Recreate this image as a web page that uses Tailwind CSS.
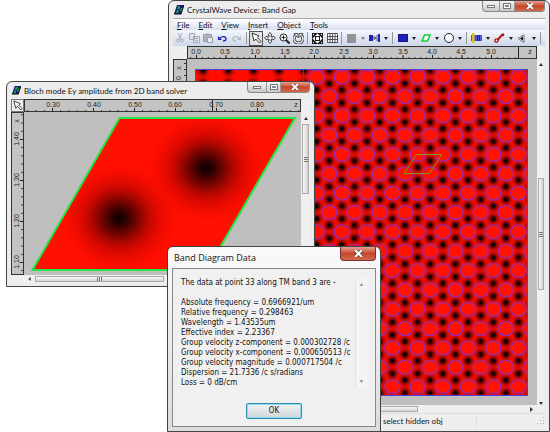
<!DOCTYPE html>
<html lang="en">
<head>
<meta charset="utf-8">
<meta name="viewport" content="width=device-width, initial-scale=1">
<title>CrystalWave Device: Band Gap</title>
<script src="https://cdn.jsdelivr.net/npm/@tailwindcss/browser@4"></script>
</head>
<body class="relative min-h-screen overflow-hidden bg-white font-[Lato,'Noto_Sans',sans-serif] text-[8px] leading-[10px] text-[#111]">

<!-- Device window -->
<section aria-label="CrystalWave Device: Band Gap" class="absolute top-0 right-0 bottom-0 left-[168px] flex flex-col rounded-t-md border border-[#444] bg-[#ececec] px-[4px] pb-[3px]">
  <header class="flex h-[17px] shrink-0 items-center gap-[3px] pl-px">
    <svg class="h-[10px] w-[10px]" viewBox="0 0 10 10"><path d="M3 0H10L7 9H0Z" fill="#1a1a80"/><path d="M4 1H6V4H3ZM7 3H9L8 6H6ZM3 5H5L4 8H2Z" fill="#18b030"/><path d="M10 0L7 9H0" fill="none" stroke="#111"/></svg>
    <h1 class="grow whitespace-nowrap">CrystalWave Device: Band Gap</h1>
    <div class="flex h-[11px] self-start overflow-hidden rounded-b-sm border border-t-0 border-[#888] bg-linear-to-b from-[#f4f4f4] to-[#c9c9c9]">
      <button aria-label="Minimize" class="flex w-[17px] items-center justify-center border-r border-[#999]"><span class="h-[3px] w-[8px] border border-[#777] bg-white"></span></button>
      <button aria-label="Maximize" class="flex w-[15px] items-center justify-center border-r border-[#999]"><span class="h-[6px] w-[8px] border border-[#777] bg-white p-px"><span class="block h-[2px] border border-[#888]"></span></span></button>
      <button aria-label="Close" class="flex w-[29px] items-center justify-center bg-linear-to-b from-[#e3a093] via-[#c8452c] to-[#d0694a]"><svg class="h-[6px] w-[8px]" viewBox="0 0 8 6"><path d="M1 0L7 6M7 0L1 6" stroke="#555" stroke-width="3"/><path d="M1 0L7 6M7 0L1 6" stroke="#fff" stroke-width="1.8"/></svg></button>
    </div>
  </header>
  <nav class="flex h-[12px] shrink-0 items-center gap-[9px] border-t border-[#aaa] bg-linear-to-b from-white to-[#d8dfef] pl-[4px]">
    <button><u>F</u>ile</button><button><u>E</u>dit</button><button><u>V</u>iew</button><button><u>I</u>nsert</button><button><u>O</u>bject</button><button><u>T</u>ools</button>
  </nav>
  <div role="toolbar" class="flex h-[16px] shrink-0 items-center overflow-hidden bg-linear-to-b from-[#f4f7fd] to-[#cdd6ea]">
    <button aria-label="Cut" class="w-[14px] shrink-0"><svg class="mx-auto h-[10px] w-[8px]" viewBox="0 0 8 10" fill="none" stroke="#aab" ><path d="M2 0L5 6M6 0L3 6"/><circle cx="2" cy="7.5" r="1.4"/><circle cx="6" cy="7.5" r="1.4"/></svg></button>
    <button aria-label="Copy" class="w-[14px] shrink-0"><svg class="mx-auto h-[10px] w-[11px]" viewBox="0 0 11 10" fill="#dfe3ea" stroke="#a4a8b0"><path d="M.5 .5H5.500V6.500H.5ZM4.500 3.500H10.500V9.500H4.500Z"/><path d="M6 5.500H9M6 7.500H9"/></svg></button>
    <button aria-label="Paste" class="w-[14px] shrink-0"><svg class="mx-auto h-[10px] w-[10px]" viewBox="0 0 10 10" fill="#b0b3b9" stroke="#999da5"><path d="M.5 1.500H8.500V8.500H.5Z"/><path d="M4.500 4.500H9.500V9.500H4.500Z" fill="#e8ebf0"/><path d="M3 1H6"/></svg></button>
    <button aria-label="Undo" class="w-[14px] shrink-0"><svg class="mx-auto h-[7px] w-[9px]" viewBox="0 0 9 7"><path d="M2 3C4 1 8 1 8 4C8 5 7 6 5 6" fill="none" stroke="#2222b0" stroke-width="1.300"/><path d="M0 1V5H4Z" fill="#2222b0"/></svg></button>
    <button aria-label="Redo" class="w-[15px] shrink-0"><svg class="mx-auto h-[7px] w-[9px]" viewBox="0 0 9 7"><path d="M7 3C5 1 1 1 1 4C1 5 2 6 4 6" fill="none" stroke="#b4b8c2" stroke-width="1.300"/><path d="M9 1V5H5Z" fill="#b4b8c2"/></svg></button>
    <span class="mx-[2px] h-[12px] w-px shrink-0 bg-[#999]"></span>
    <button aria-label="Select" class="h-[15px] w-[14px] shrink-0 border border-[#555] bg-[#e2e2e2]"><svg class="mx-auto h-[12px] w-[11px]" viewBox="0 0 11 12"><path d="M1 1L8 4L6.300 5.500L10 9.500L8.500 11L4.800 7L3 9Z" fill="#fff" stroke="#333"/></svg></button>
    <button aria-label="Pan" class="w-[14px] shrink-0"><svg class="mx-auto h-[12px] w-[12px]" viewBox="0 0 12 12"><path d="M6 .5L8 3H7V5H9V4L11.500 6L9 8V7H7V9H8L6 11.500L4 9H5V7H3V8L.5 6L3 4V5H5V3H4Z" fill="#fff" stroke="#333" stroke-width=".9"/></svg></button>
    <button aria-label="Zoom" class="w-[14px] shrink-0"><svg class="mx-auto h-[11px] w-[11px]" viewBox="0 0 11 11"><circle cx="4.500" cy="4.500" r="3.500" fill="#fff" stroke="#222"/><path d="M7 7L10.500 10.500" stroke="#222" stroke-width="2"/><path d="M2.500 4.500H6.500M4.500 2.500V6.500" stroke="#222"/></svg></button>
    <button aria-label="Rotate" class="w-[14px] shrink-0"><svg class="mx-auto h-[11px] w-[11px]" viewBox="0 0 11 11"><path d="M3 2C-.5 5 1 10 5.500 10S11.500 5 8 2" fill="none" stroke="#333" stroke-width="3"/><path d="M3 2C-.5 5 1 10 5.500 10S11.500 5 8 2" fill="none" stroke="#eee" stroke-width="1.400"/><path d="M1 .5H5V4.500ZM10 .5H6V4.500Z" fill="#fff" stroke="#333" stroke-width=".8"/></svg></button>
    <span class="mx-[2px] h-[12px] w-px shrink-0 bg-[#999]"></span>
    <button aria-label="Fit" class="w-[15px] shrink-0"><svg class="mx-auto h-[11px] w-[11px]" viewBox="0 0 11 11"><path d="M0 0H11V11H0Z" fill="#1c1c1c"/><path d="M4 4H7V7H4ZM5.500 .5L8 3H3ZM5.500 10.500L8 8H3ZM.5 5.500L3 3V8ZM10.500 5.500L8 3V8ZM1 1H2V2H1ZM9 1H10V2H9ZM1 9H2V10H1ZM9 9H10V10H9Z" fill="#fff"/></svg></button>
    <button aria-label="Grid" class="w-[14px] shrink-0"><svg class="mx-auto h-[10px] w-[11px]" viewBox="0 0 11 10"><path d="M.5 .5H10.500V9.500H.5ZM3 0V10M5.500 0V10M8 0V10M0 3.500H11M0 6.500H11" fill="#fff" stroke="#444" stroke-width=".9"/></svg></button>
    <span class="mx-[2px] h-[12px] w-px shrink-0 bg-[#999]"></span>
    <button aria-label="Fill" class="w-[15px] shrink-0"><span class="mx-auto block h-[9px] w-[9px] bg-[#949494]"></span></button>
    <button aria-label="Fill options" class="w-[8px] shrink-0"><svg class="mx-auto h-[3px] w-[4px]" viewBox="0 0 4 3"><path d="M0 0H4L2 3Z" fill="#888"/></svg></button>
    <button aria-label="Waveguide" class="w-[15px] shrink-0"><svg class="mx-auto h-[8px] w-[11px]" viewBox="0 0 11 8"><path d="M0 1H4V7H0ZM9 0H11V8H9Z" fill="#2020b8"/><path d="M5 2.500L7 4L5 5.500ZM8 1V7" fill="#fff" stroke="#223" stroke-width=".8"/></svg></button>
    <button aria-label="Waveguide options" class="w-[8px] shrink-0"><svg class="mx-auto h-[3px] w-[4px]" viewBox="0 0 4 3"><path d="M0 0H4L2 3Z" fill="#222"/></svg></button>
    <span class="mx-[2px] h-[12px] w-px shrink-0 bg-[#999]"></span>
    <button aria-label="Rectangle" class="w-[15px] shrink-0"><span class="mx-auto block h-[8px] w-[10px] border border-[#15157a] bg-[#2020c0]"></span></button>
    <button aria-label="Rectangle options" class="w-[8px] shrink-0"><svg class="mx-auto h-[3px] w-[4px]" viewBox="0 0 4 3"><path d="M0 0H4L2 3Z" fill="#222"/></svg></button>
    <button aria-label="Parallelogram" class="w-[15px] shrink-0"><svg class="mx-auto h-[8px] w-[10px]" viewBox="0 0 10 8"><path d="M3.500 1H9L6.500 7H1Z" fill="#fff" stroke="#12d030" stroke-width="1.600"/></svg></button>
    <button aria-label="Parallelogram options" class="w-[8px] shrink-0"><svg class="mx-auto h-[3px] w-[4px]" viewBox="0 0 4 3"><path d="M0 0H4L2 3Z" fill="#222"/></svg></button>
    <button aria-label="Circle" class="w-[15px] shrink-0"><span class="mx-auto block h-[10px] w-[10px] rounded-full border border-[#222] bg-white"></span></button>
    <button aria-label="Circle options" class="w-[8px] shrink-0"><svg class="mx-auto h-[3px] w-[4px]" viewBox="0 0 4 3"><path d="M0 0H4L2 3Z" fill="#222"/></svg></button>
    <span class="mx-[2px] h-[12px] w-px shrink-0 bg-[#999]"></span>
    <button aria-label="Source" class="w-[15px] shrink-0"><svg class="mx-auto h-[10px] w-[11px]" viewBox="0 0 11 10"><path d="M0 2H11V8H0Z" fill="#4c58d8"/><path d="M6.500 2V8M8.500 2V8" stroke="#1818a0"/><path d="M1 0H3.500V10H1Z" fill="#e0c020"/></svg></button>
    <button aria-label="Source options" class="w-[8px] shrink-0"><svg class="mx-auto h-[3px] w-[4px]" viewBox="0 0 4 3"><path d="M0 0H4L2 3Z" fill="#222"/></svg></button>
    <button aria-label="Sensor" class="w-[15px] shrink-0"><svg class="mx-auto h-[10px] w-[11px]" viewBox="0 0 11 10"><path d="M3 7.500L8 2" stroke="#b01414" stroke-width="2"/><circle cx="2.500" cy="7.500" r="1.600" fill="#fff" stroke="#b01414" stroke-width="1.400"/><circle cx="8.800" cy="1.800" r="1.500" fill="#b01414"/></svg></button>
    <button aria-label="Sensor options" class="w-[8px] shrink-0"><svg class="mx-auto h-[3px] w-[4px]" viewBox="0 0 4 3"><path d="M0 0H4L2 3Z" fill="#222"/></svg></button>
    <button aria-label="View" class="w-[15px] shrink-0"><svg class="mx-auto h-[9px] w-[9px]" viewBox="0 0 9 9"><path d="M0 4.500L6 .5M0 4.500L6 8.500M6 1V8" fill="none" stroke="#777"/><path d="M2 4.500L5 2.500V6.500Z" fill="#111"/></svg></button>
    <button aria-label="View options" class="w-[8px] shrink-0"><svg class="mx-auto h-[3px] w-[4px]" viewBox="0 0 4 3"><path d="M0 0H4L2 3Z" fill="#222"/></svg></button>
    <span class="mx-[2px] h-[12px] w-px shrink-0 bg-[#999]"></span>
  </div>
  <div class="flex min-h-0 grow">
    <div class="flex min-w-0 grow flex-col">
      <div class="flex min-h-0 grow">
        <div class="flex w-[14px] shrink-0 flex-col">
          <div class="h-[13px] bg-[#eee]"></div>
          <svg class="w-full grow border border-[#333] bg-[#c4c4c4]">
            <defs><pattern id="vt" y="9" width="13" height="6" patternUnits="userSpaceOnUse"><path d="M10 .5H12" stroke="#333"/></pattern></defs>
            <rect width="13" height="100%" fill="url(#vt)"/>
            <g font-family="Liberation Sans, sans-serif" font-size="7" fill="#222" text-anchor="middle"><text transform="translate(7 8) rotate(-90)">x</text><text transform="translate(7 21) rotate(-90)">0.0</text></g>
          </svg>
        </div>
        <div class="flex min-w-0 grow flex-col">
          <svg class="h-[13px] w-full shrink-0 border border-[#333] bg-[#c4c4c4]">
            <defs><pattern id="ht" x="196" width="5.900" height="13" patternUnits="userSpaceOnUse"><path d="M.5 10V12" stroke="#333"/></pattern><pattern id="hm" x="196" width="29.500" height="13" patternUnits="userSpaceOnUse"><path d="M.5 8V12" stroke="#222"/></pattern></defs>
            <g transform="translate(-188 0)">
              <path d="M187 0H518V12H187Z" fill="url(#ht)"/><path d="M187 0H518V12H187Z" fill="url(#hm)"/>
              <path d="M518.500 0V12" stroke="#222"/>
              <g font-family="Liberation Sans, sans-serif" font-size="7" fill="#222" text-anchor="middle">
                <text x="196" y="7">0.0</text><text x="225" y="7">0.5</text><text x="255" y="7">1.0</text><text x="285" y="7">1.5</text><text x="314" y="7">2.0</text><text x="344" y="7">2.5</text><text x="373" y="7">3.0</text><text x="403" y="7">3.5</text><text x="432" y="7">4.0</text><text x="461" y="7">4.5</text><text x="491" y="7">5.0</text><text x="530" y="7">z</text>
              </g>
            </g>
          </svg>
          <svg role="img" aria-label="Crystal lattice field" class="min-h-0 w-full grow bg-[#bfbfbf]">
            <defs>
              <radialGradient id="dk"><stop offset="0" stop-color="#000"/><stop offset=".22" stop-color="#000" stop-opacity=".85"/><stop offset=".5" stop-color="#300" stop-opacity=".4"/><stop offset="1" stop-color="#900" stop-opacity="0"/></radialGradient>
              <pattern id="field" x="304" y="77" width="25.240" height="38.700" patternUnits="userSpaceOnUse">
                <rect width="26" height="39" fill="#ff0e00"/>
                <g fill="url(#dk)"><circle cx="12.620" cy="12.900" r="8"/><circle cx="12.620" cy="25.800" r="8"/><circle cy="6.450" r="8"/><circle cx="25.240" cy="6.450" r="8"/><circle cy="32.250" r="8"/><circle cx="25.240" cy="32.250" r="8"/><circle cy="45.150" r="8"/><circle cx="25.240" cy="45.150" r="8"/><circle cy="-6.450" r="8"/><circle cx="25.240" cy="-6.450" r="8"/></g>
              </pattern>
              <pattern id="rods" x="304" y="77" width="25.240" height="38.700" patternUnits="userSpaceOnUse">
                <g fill="#ff1400" fill-opacity=".7" stroke="#7a30d8" stroke-width="1.100"><ellipse cx="12.620" cy="0" rx="7.700" ry="7"/><ellipse cx="12.620" cy="38.700" rx="7.700" ry="7"/><ellipse cx="0" cy="19.350" rx="7.700" ry="7"/><ellipse cx="25.240" cy="19.350" rx="7.700" ry="7"/></g>
              </pattern>
            </defs>
            <g transform="translate(-187 -59)">
              <rect x="196" y="69" width="332" height="327" fill="url(#field)"/>
              <rect x="304" y="69" width="224" height="327" fill="url(#rods)"/>
              <path d="M303.500 69V396" stroke="#5030d0"/>
              <rect x="195.500" y="69.500" width="332" height="326" fill="none" stroke="#5040e0"/>
              <path d="M416.500 154.500H441.500L429.500 173.500H404Z" fill="none" stroke="#7a9a18"/>
            </g>
          </svg>
        </div>
      </div>
      <div class="flex h-[8px] shrink-0 items-center bg-[#efefef] pr-[4px]">
        <div class="h-[6px] w-[68%] border border-[#aaa] bg-linear-to-b from-[#f8f8f8] to-[#d4d4d4]"></div>
        <svg class="ml-auto h-[5px] w-[3px]" viewBox="0 0 3 5"><path d="M0 0L3 2.500L0 5Z" fill="#333"/></svg>
      </div>
    </div>
    <div class="flex w-[8px] shrink-0 flex-col items-center bg-[#efefef] pt-[17px]">
      <svg class="h-[3px] w-[4px]" viewBox="0 0 4 3"><path d="M0 3H4L2 0Z" fill="#333"/></svg>
      <span class="basis-[32%]"></span>
      <span class="flex w-[6px] basis-[32%] items-center justify-center border border-[#aaa] bg-linear-to-r from-[#f8f8f8] to-[#d0d0d0]"><span class="flex h-[5px] w-[4px] flex-col justify-center border-y border-[#777]"><span class="h-px bg-[#777]"></span></span></span>
      <svg class="mt-auto mb-[8px] h-[3px] w-[4px]" viewBox="0 0 4 3"><path d="M0 0H4L2 3Z" fill="#333"/></svg>
    </div>
  </div>
  <footer class="flex h-[15px] shrink-0 items-center justify-between border-t border-[#ddd] bg-[#f0efee]">
    <span class="ml-auto w-[94px] border-r border-[#ddd] whitespace-nowrap">select hidden obj</span>
    <svg class="ml-[60px] h-[8px] w-[8px]" viewBox="0 0 8 8"><path d="M6 0H7V1H6ZM3 3H4V4H3ZM6 3H7V4H6ZM0 6H1V7H0ZM3 6H4V7H3ZM6 6H7V7H6Z" fill="#aaa"/></svg>
  </footer>
</section>

<!-- Bloch mode window -->
<section aria-label="Bloch mode" class="absolute top-[81px] left-[6px] flex h-[206px] w-[309px] flex-col rounded-t-md border border-[#444] bg-[#ececec] px-[4px] pb-[3px]">
  <header class="flex h-[17px] shrink-0 items-center gap-[3px] pl-px">
    <svg class="h-[9px] w-[9px]" viewBox="0 0 10 10"><path d="M3 0H10L7 9H0Z" fill="#1a1a80"/><path d="M4 1H6V4H3ZM7 3H9L8 6H6ZM3 5H5L4 8H2Z" fill="#18b030"/><path d="M10 0L7 9H0" fill="none" stroke="#111"/></svg>
    <h2 class="grow whitespace-nowrap">Bloch mode Ey amplitude from 2D band solver</h2>
    <div class="flex h-[11px] self-start overflow-hidden rounded-b-sm border border-t-0 border-[#888] bg-linear-to-b from-[#f4f4f4] to-[#c9c9c9]">
      <button aria-label="Minimize" class="flex w-[19px] items-center justify-center border-r border-[#999]"><span class="h-[3px] w-[8px] border border-[#777] bg-white"></span></button>
      <button aria-label="Maximize" class="flex w-[14px] items-center justify-center border-r border-[#999]"><span class="h-[6px] w-[8px] border border-[#777] bg-white p-px"><span class="block h-[2px] border border-[#888]"></span></span></button>
      <button aria-label="Close" class="flex w-[28px] items-center justify-center bg-linear-to-b from-[#e3a093] via-[#c8452c] to-[#d0694a]"><svg class="h-[6px] w-[8px]" viewBox="0 0 8 6"><path d="M1 0L7 6M7 0L1 6" stroke="#555" stroke-width="3"/><path d="M1 0L7 6M7 0L1 6" stroke="#fff" stroke-width="1.8"/></svg></button>
    </div>
  </header>
  <div class="flex min-h-0 grow">
    <div class="flex w-[13px] shrink-0 flex-col">
      <button aria-label="Select" class="h-[13px] border border-[#777] bg-[#eee]"><svg class="mx-auto h-[11px] w-[10px]" viewBox="0 0 11 12"><path d="M1 1L8 4L6.300 5.500L10 9.500L8.500 11L4.800 7L3 9Z" fill="#fff" stroke="#333"/></svg></button>
      <svg class="min-h-0 w-full grow border border-[#333] bg-[#c4c4c4]">
        <defs><pattern id="vb" y="139" width="13" height="8.200" patternUnits="userSpaceOnUse"><path d="M9 .5H11" stroke="#333"/></pattern></defs>
        <g transform="translate(0 -113)">
          <rect y="113" width="12" height="162" fill="url(#vb)"/>
          <path d="M8 139.500H11M8 180.500H11M8 221.500H11M8 262.500H11" stroke="#222"/>
          <g font-family="Liberation Sans, sans-serif" font-size="7" fill="#222" text-anchor="middle"><text transform="translate(7 121) rotate(-90)">x</text><text transform="translate(7 139) rotate(-90)">1.40</text><text transform="translate(7 180) rotate(-90)">1.30</text><text transform="translate(7 221) rotate(-90)">1.20</text><text transform="translate(7 262) rotate(-90)">1.10</text></g>
        </g>
      </svg>
    </div>
    <div class="flex min-w-0 grow flex-col">
      <svg class="h-[13px] w-full shrink-0 border border-[#333] bg-[#c4c4c4]">
        <defs><pattern id="hb" x="51" width="8.200" height="13" patternUnits="userSpaceOnUse"><path d="M.5 10V12" stroke="#333"/></pattern></defs>
        <g transform="translate(-24 0)">
          <rect x="24" width="280" height="12" fill="url(#hb)"/>
          <path d="M51.500 8V12M92.500 8V12M133.500 8V12M174.500 8V12M215.500 8V12M256.500 8V12M211.500 0V12" stroke="#222"/>
          <g font-family="Liberation Sans, sans-serif" font-size="7" fill="#222" text-anchor="middle"><text x="52" y="7">0.30</text><text x="93" y="7">0.40</text><text x="134" y="7">0.50</text><text x="174" y="7">0.60</text><text x="215" y="7">0.70</text><text x="256" y="7">0.80</text><text x="295" y="7">z</text></g>
        </g>
      </svg>
      <svg role="img" aria-label="Ey amplitude" class="min-h-0 w-full grow bg-[#bfbfbf]">
        <defs>
          <radialGradient id="blob"><stop offset="0" stop-color="#0c0000"/><stop offset=".1" stop-color="#1c0000" stop-opacity=".96"/><stop offset=".3" stop-color="#400" stop-opacity=".75"/><stop offset=".55" stop-color="#900" stop-opacity=".5"/><stop offset="1" stop-color="#f00" stop-opacity="0"/></radialGradient>
          <clipPath id="cell"><path d="M119.500 118H295L207 270H32.500Z"/></clipPath>
        </defs>
        <g transform="translate(-24 -112)">
          <g clip-path="url(#cell)"><rect x="30" y="116" width="270" height="156" fill="#ff1000"/><ellipse cx="119" cy="218" rx="60" ry="56" fill="url(#blob)"/><ellipse cx="206" cy="168" rx="60" ry="56" fill="url(#blob)"/></g>
          <path d="M119.500 118H295L207 270H32.500Z" fill="none" stroke="#22e844" stroke-width="2"/>
        </g>
      </svg>
    </div>
    <div class="flex w-[9px] shrink-0 flex-col items-center bg-[#efefef] pt-[18px]">
      <svg class="h-[3px] w-[4px]" viewBox="0 0 4 3"><path d="M0 3H4L2 0Z" fill="#333"/></svg>
      <span class="mt-[4px] flex h-[70px] w-[7px] items-center justify-center border border-[#aaa] bg-linear-to-r from-[#f8f8f8] to-[#d0d0d0]"><span class="flex h-[5px] w-[4px] flex-col justify-center border-y border-[#777]"><span class="h-px bg-[#777]"></span></span></span>
    </div>
  </div>
  <div class="flex h-[8px] shrink-0 items-center bg-[#efefef] pl-[17px]">
    <svg class="h-[4px] w-[3px]" viewBox="0 0 3 5"><path d="M3 0L0 2.500L3 5Z" fill="#333"/></svg>
    <div class="ml-[4px] flex h-[6px] w-[129px] items-center justify-center border border-[#aaa] bg-linear-to-b from-[#f8f8f8] to-[#d4d4d4]"><span class="flex h-[4px] w-[5px] justify-center border-x border-[#777]"><span class="w-px bg-[#777]"></span></span></div>
  </div>
</section>

<!-- Data dialog -->
<section role="dialog" aria-labelledby="dlg" class="absolute top-[246px] left-[167px] flex h-[186px] w-[214px] flex-col rounded-t-md border border-[#444] bg-linear-to-b from-[#fafafa] to-[#dcdcdc] px-[4px] pb-[4px]">
  <header class="flex h-[21px] shrink-0 items-center justify-between pl-[2px]">
    <h2 id="dlg" class="font-['Open_Sans','Noto_Sans',sans-serif] text-[9px]">Band Diagram Data</h2>
    <button aria-label="Close" class="flex h-[14px] w-[36px] items-center justify-center self-start rounded-b-sm border border-t-0 border-[#733] bg-linear-to-b from-[#e3a093] via-[#c8452c] to-[#d0694a]"><svg class="h-[7px] w-[9px]" viewBox="0 0 8 6"><path d="M1 0L7 6M7 0L1 6" stroke="#555" stroke-width="3"/><path d="M1 0L7 6M7 0L1 6" stroke="#fff" stroke-width="1.8"/></svg></button>
  </header>
  <div class="flex min-h-0 grow flex-col border border-[#888] bg-[#f0f0f0] pt-[9px] pr-[8px] pb-[7px] pl-[8px] font-['DejaVu_Sans_Condensed','DejaVu_Sans',sans-serif]">
    <div class="flex justify-between">
      <div class="w-0 whitespace-nowrap">
        <p class="mb-[10px]">The data at point 33 along TM band 3 are -</p>
        <p>Absolute frequency = 0.6966921/um</p>
        <p>Relative frequency = 0.298463</p>
        <p>Wavelength = 1.43535um</p>
        <p>Effective index = 2.23367</p>
        <p>Group velocity z-component = 0.000302728 /c</p>
        <p>Group velocity x-component = 0.000650513 /c</p>
        <p>Group velocity magnitude = 0.000717504 /c</p>
        <p>Dispersion = 21.7336 /c s/radians</p>
        <p>Loss = 0 dB/cm</p>
      </div>
      <div class="flex w-[12px] flex-col items-center justify-between border-l border-[#e2e2e2] bg-[#f4f4f4] py-[5px]">
        <svg class="h-[3px] w-[5px]" viewBox="0 0 4 3"><path d="M0 3H4L2 0Z" fill="#999"/></svg>
        <svg class="h-[3px] w-[5px]" viewBox="0 0 4 3"><path d="M0 0H4L2 3Z" fill="#999"/></svg>
      </div>
    </div>
    <button class="mx-auto mt-auto h-[16px] w-[56px] rounded-xs border border-[#2a8ab0] bg-linear-to-b from-[#f2f2f2] to-[#d2d6d8] ring-1 ring-[#8fdcf5] ring-inset">OK</button>
  </div>
</section>
</body>
</html>
